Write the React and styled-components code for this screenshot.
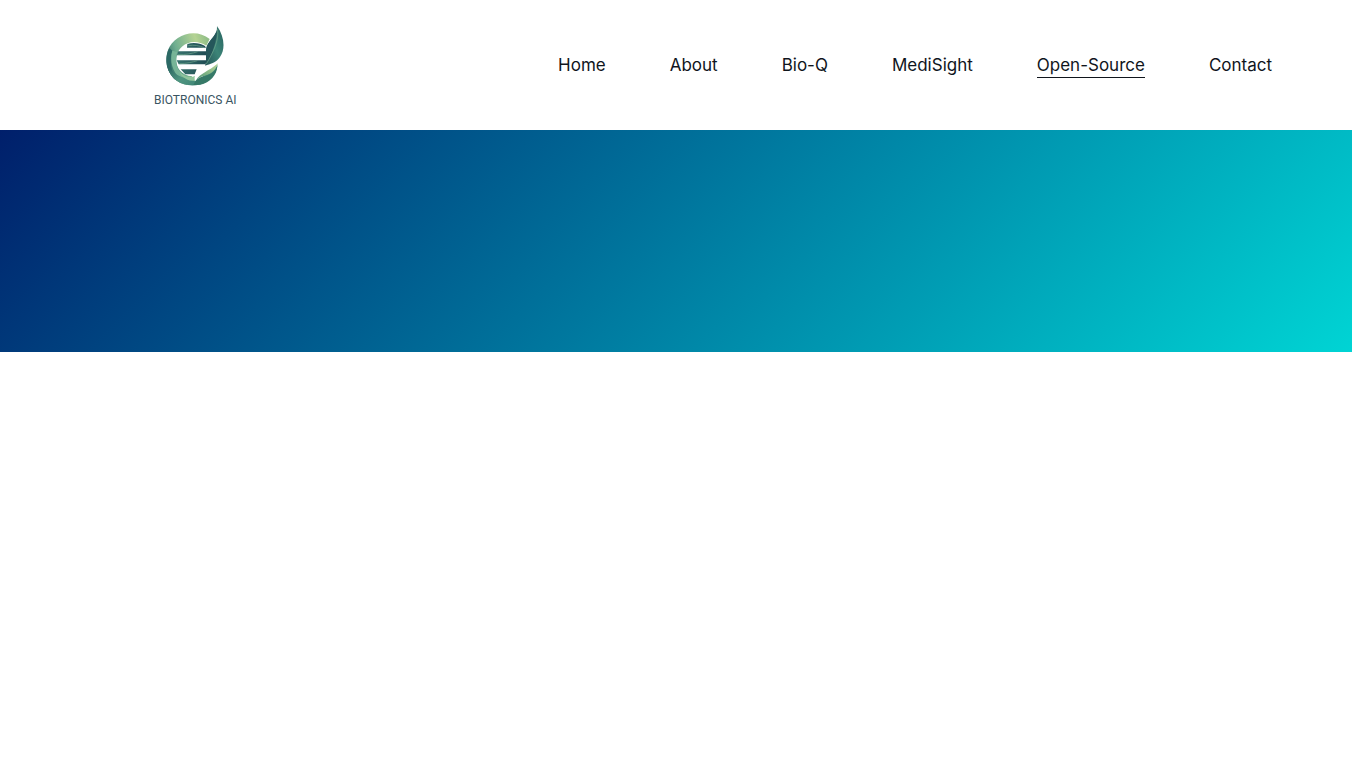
import React from 'react';
import styled, { createGlobalStyle } from 'styled-components';

const links = [
  { name: 'Home', href: '#home' },
  { name: 'About', href: '#about' },
  { name: 'Bio-Q', href: '#bio-q' },
  { name: 'MediSight', href: '#medisight' },
  { name: 'Open-Source', href: '#open-source' },
  { name: 'Contact', href: '#contact' },
];

function LogoMark() {
  return (
    <Mark viewBox="60 30 180 186" aria-hidden="true">
      <defs>
        <linearGradient id="ring" x1="0" y1="0.6" x2="1" y2="0.2">
          <stop offset="0" stopColor="#2f6b64" />
          <stop offset="0.3" stopColor="#6fae90" />
          <stop offset="0.75" stopColor="#b5d393" />
          <stop offset="1" stopColor="#8fbd86" />
        </linearGradient>
        <linearGradient id="ringLow" x1="0" y1="0" x2="1" y2="0.6">
          <stop offset="0" stopColor="#245c5b" />
          <stop offset="0.5" stopColor="#4f9580" />
          <stop offset="1" stopColor="#3b8173" />
        </linearGradient>
        <linearGradient id="leaf" x1="0" y1="1" x2="1" y2="0">
          <stop offset="0" stopColor="#245457" />
          <stop offset="0.5" stopColor="#3c8477" />
          <stop offset="1" stopColor="#26625f" />
        </linearGradient>
        <linearGradient id="smallLeaf" x1="0" y1="1" x2="1" y2="0">
          <stop offset="0" stopColor="#4c9279" />
          <stop offset="0.6" stopColor="#8fbd88" />
          <stop offset="1" stopColor="#b9d79a" />
        </linearGradient>
        <linearGradient id="bars" x1="0" y1="0" x2="1" y2="0">
          <stop offset="0" stopColor="#38736d" />
          <stop offset="1" stopColor="#1f4b53" />
        </linearGradient>
      </defs>
      <path fill="url(#ring)" d="M194 72C151 37 86 58 68 108C60 137 64 165 82 184C91 197 107 207 126 210L142 184C109 181 92 159 94 129C98 88 144 66 184 92Z" />
      <path fill="#2c6965" d="M73 99C56 130 64 170 92 196C76 165 74 131 82 107Z" />
      <path fill="#77b497" d="M82 107C73 139 83 169 105 190L121 182C95 168 88 143 97 111Z" />
      <path fill="url(#ringLow)" d="M67 153C75 196 118 219 163 209C199 199 216 174 218 147L195 157C187 180 156 198 125 190C99 186 80 169 67 153Z" />
      <path fill="#91c59c" d="M103 171C121 189 143 190 154 179L151 198C128 198 110 188 103 171Z" />
      <path fill="url(#bars)" d="M127 87C145 81 166 84 180 93L183 98H126ZM99 109H185V121H95ZM95 136H186L181 148H101ZM107 163H155L149 178H121Z" />
      <path stroke="#70a58b" strokeWidth="2" fill="none" d="M130 92C146 89 164 92 178 98M97 119C123 120 142 115 158 110M103 146C125 146 143 141 157 137" />
      <path fill="url(#leaf)" d="M216 33C220 58 193 73 185 95C180 112 186 130 181 152C194 147 213 144 225 126C242 101 238 64 216 33Z" />
      <path fill="#25565a" d="M216 33C220 58 193 73 185 95C180 112 186 130 181 152C197 123 217 90 216 33Z" />
      <path stroke="#70a58b" strokeWidth="2" fill="none" d="M218 42C222 78 205 111 184 147" />
      <path fill="#fff" d="M222 143C206 150 181 150 166 160C151 169 147 182 150 199C164 188 172 187 183 177C199 166 211 162 222 143Z" />
      <path fill="url(#smallLeaf)" d="M219 145C211 172 190 181 173 184C163 188 156 193 152 197C166 174 190 170 219 145Z" />
      <path fill="#367967" d="M152 197C164 184 181 185 196 177C207 171 213 162 217 152C216 180 195 203 166 209L145 210Z" />
    </Mark>
  );
}

function App() {
  return (
    <>
      <GlobalStyle />
      <Header>
        <Logo href="#home" aria-label="Biotronics AI">
          <LogoMark />
          <LogoText>BIOTRONICS AI</LogoText>
        </Logo>
        <Nav>
          {links.map(link => (
            <NavLink key={link.name} href={link.href} $active={link.name === 'Open-Source'}>
              {link.name}
            </NavLink>
          ))}
        </Nav>
      </Header>
      <main>
        <Banner />
      </main>
    </>
  );
}

export default App;

const GlobalStyle = createGlobalStyle`
* {
  box-sizing: border-box;
}
body {
  margin: 0;
  background-color: white;
  font-family: Inter, "Open Sans", sans-serif;
}
`;

const Header = styled.header`
display: flex;
align-items: center;
justify-content: space-between;
min-height: 130px;
padding: 0 80px;
background-color: white;
`;

const Logo = styled.a`
display: flex;
flex-direction: column;
align-items: center;
gap: 7px;
margin-left: 74px;
padding-top: 1px;
text-decoration: none;
`;

const Mark = styled.svg`
display: block;
width: 60px;
height: 62px;
`;

const LogoText = styled.span`
font-family: Roboto, sans-serif;
font-size: 12px;
line-height: 12px;
color: #3a5562;
white-space: nowrap;
`;

const Nav = styled.nav`
display: flex;
gap: 64px;
`;

const NavLink = styled.a`
padding-top: 1px;
border-bottom: 1px solid ${props => (props.$active ? '#10151c' : 'transparent')};
font-size: 17px;
line-height: 24px;
color: #10151c;
text-decoration: none;
white-space: nowrap;
`;

const Banner = styled.section`
height: 222px;
background: linear-gradient(135deg, #001f6b, #00d4d4);
`;
